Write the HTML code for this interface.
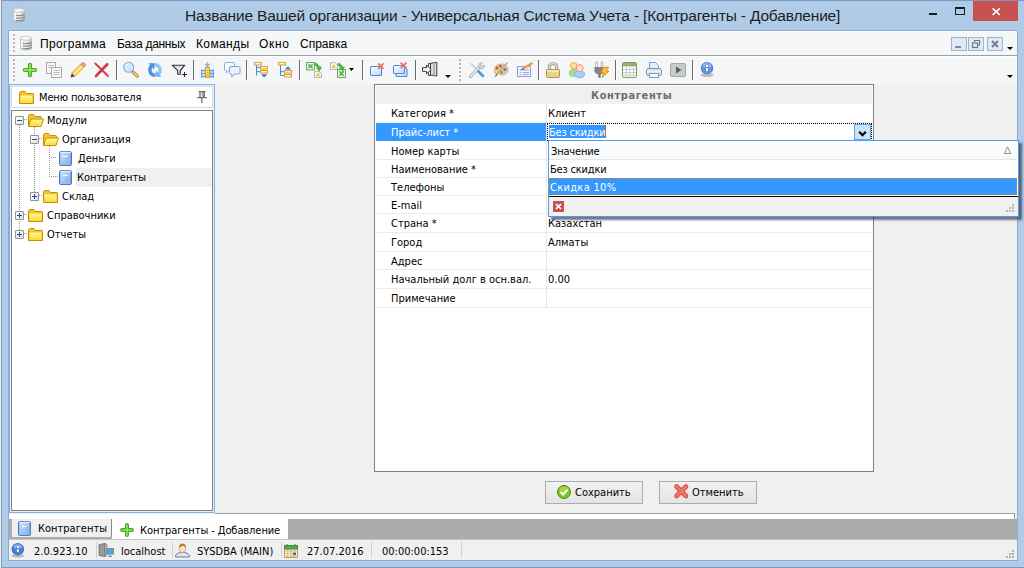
<!DOCTYPE html>
<html lang="ru">
<head>
<meta charset="utf-8">
<title>Контрагенты - Добавление</title>
<style>
*{box-sizing:border-box;margin:0;padding:0}
html,body{width:1024px;height:568px;overflow:hidden;background:#f1efea}
body{position:relative;font-family:"DejaVu Sans Condensed","Liberation Sans",sans-serif;font-size:11px;color:#000;line-height:1}
.a{position:absolute}
.t{position:absolute;white-space:nowrap;line-height:16px;height:16px}
.seg{font-family:"Liberation Sans",sans-serif}
svg{position:absolute;overflow:visible}
#frame{left:1px;top:0;width:1023px;height:568px;background:#b0cbe8;border:1px solid #7e98b9;border-right:0}
#edge{left:8px;top:30px;width:1010px;height:531px;background:#8faace}
#title{left:185px;top:7px;font-size:15.5px;line-height:18px;height:18px;color:#1e1e1e;letter-spacing:-.165px}
#close{left:973px;top:1px;width:45px;height:20px;background:#c75050}
#client{left:9px;top:31px;width:1008px;height:529px;background:#f0f0f0}
#menubar{left:9px;top:31px;width:1008px;height:24px;background:#f5f6f7;border-top:1px solid #fff}
#menuline{left:9px;top:55px;width:1008px;height:1px;background:#a0a0a0}
#toolbar{left:9px;top:56px;width:1008px;height:28px;background:#f5f6f7;border-top:1px solid #fdfdfd}
.mi{font-size:12px;top:36px;line-height:16px;height:16px;color:#000}
.sep{position:absolute;top:60px;width:1px;height:20px;background:#6c6c6c;box-shadow:1px 0 0 #fbfbfb}
.grip{position:absolute;width:2px;background-image:repeating-linear-gradient(#bababa 0,#bababa 2px,transparent 2px,transparent 4px)}
.mdib{position:absolute;top:37px;width:16px;height:14px;background:#dfeaf6;border:1px solid #9fb3c9}

.vd{position:absolute;width:1px;background-image:repeating-linear-gradient(#9a9a9a 0,#9a9a9a 1px,transparent 1px,transparent 2px)}
.hd{position:absolute;height:1px;background-image:repeating-linear-gradient(90deg,#9a9a9a 0,#9a9a9a 1px,transparent 1px,transparent 2px)}
.xb{position:absolute;width:9px;height:9px;border:1px solid #919191;background:linear-gradient(135deg,#fff,#e0e0e0);border-radius:1px}
.xb i{position:absolute;left:1px;top:3px;width:5px;height:1px;background:#2c489e}
.xb b{position:absolute;left:3px;top:1px;width:1px;height:5px;background:#2c489e}
.gl{position:absolute;left:376px;width:496px;height:1px;background:#ececec}
.dot{position:absolute;width:2px;height:2px;background:#b8b8b8}
.dot2{position:absolute;width:2px;height:2px;background:#b0b0b0}
.btn{position:absolute;top:481px;width:98px;height:23px;border:1px solid #acacac;background:linear-gradient(#f2f2f2,#e4e4e4)}
.ss{position:absolute;top:542px;width:1px;height:16px;background:#d0d0d0}
</style>
</head>
<body>
<div id="frame" class="a"></div>
<!-- title icon -->
<svg style="left:12px;top:7px" width="14" height="16" viewBox="0 0 14 16"><defs><linearGradient id="bk" x1="0" y1="0" x2="1" y2="1"><stop offset="0" stop-color="#d4e6f8"/><stop offset="1" stop-color="#7daae2"/></linearGradient><linearGradient id="dbg" x1="0" y1="0" x2="1" y2="0"><stop offset="0" stop-color="#f4f4f4"/><stop offset=".55" stop-color="#ececec"/><stop offset="1" stop-color="#bdbdbd"/></linearGradient><linearGradient id="wn" x1="0" y1="0" x2="1" y2="1"><stop offset="0" stop-color="#ffffff"/><stop offset="1" stop-color="#b9d6f8"/></linearGradient><linearGradient id="fy" x1="0" y1="0" x2="0" y2="1"><stop offset="0" stop-color="#fff6a8"/><stop offset="1" stop-color="#ffdc28"/></linearGradient></defs><ellipse cx="7" cy="13.800" rx="6.200" ry="1.800" fill="#9aa8b8" opacity=".45"/><path d="M1.500 3.200v9.300c0 1.200 2.500 2 5.500 2s5.500-.8 5.500-2V3.200z" fill="url(#dbg)" stroke="#b4b4b4" stroke-width=".7"/><ellipse cx="7" cy="3.200" rx="5.500" ry="2" fill="#f8f8f8" stroke="#bcbcbc" stroke-width=".7"/><path d="M4 8.300c1 .3 2 .4 3 .4 3 0 5.500-.8 5.500-2M4 10.800c1 .3 2 .4 3 .4 3 0 5.500-.8 5.500-2M4 13.300c1 .3 2 .4 3 .4 3 0 5.500-.8 5.500-2" fill="none" stroke="#6a6a6a" stroke-width=".9"/></svg>
<div id="title" class="t seg">Название Вашей организации - Универсальная Система Учета - [Контрагенты - Добавление]</div>
<!-- window buttons -->
<div class="a" style="left:929px;top:13px;width:8px;height:2px;background:#1a1a1a"></div>
<div class="a" style="left:955px;top:7px;width:10px;height:8px;border:1px solid #1a1a1a;border-top-width:2px"></div>
<div id="close" class="a"></div>
<svg style="left:992px;top:8px" width="8" height="8" viewBox="0 0 8 8"><path d="M.6 .3L7.800 7M7.800 .3L.6 7" stroke="#fff" stroke-width="1.700" fill="none"/></svg>
<div id="edge" class="a"></div>
<div id="client" class="a"></div>
<div id="menubar" class="a"></div>
<div id="menuline" class="a"></div>
<div id="toolbar" class="a"></div>
<!-- menubar -->
<div class="grip" style="left:13px;top:34px;height:18px"></div>
<svg style="left:19px;top:35px" width="14" height="16" viewBox="0 0 14 16"><ellipse cx="7" cy="13.800" rx="6.200" ry="1.800" fill="#9aa8b8" opacity=".45"/><path d="M1.500 3.200v9.300c0 1.200 2.500 2 5.500 2s5.500-.8 5.500-2V3.200z" fill="url(#dbg)" stroke="#b4b4b4" stroke-width=".7"/><ellipse cx="7" cy="3.200" rx="5.500" ry="2" fill="#f8f8f8" stroke="#bcbcbc" stroke-width=".7"/><path d="M4 8.300c1 .3 2 .4 3 .4 3 0 5.500-.8 5.500-2M4 10.800c1 .3 2 .4 3 .4 3 0 5.500-.8 5.500-2M4 13.300c1 .3 2 .4 3 .4 3 0 5.500-.8 5.500-2" fill="none" stroke="#6a6a6a" stroke-width=".9"/></svg>
<div class="t seg mi" style="left:40px;letter-spacing:.35px">Программа</div>
<div class="t seg mi" style="left:117px;letter-spacing:-.3px">База данных</div>
<div class="t seg mi" style="left:196px;letter-spacing:.38px">Команды</div>
<div class="t seg mi" style="left:259px;letter-spacing:.7px">Окно</div>
<div class="t seg mi" style="left:300px">Справка</div>
<!-- MDI buttons -->
<div class="mdib" style="left:951px"></div>
<div class="a" style="left:955px;top:46px;width:6px;height:2px;background:#7d8894"></div>
<div class="mdib" style="left:968px"></div>
<svg style="left:968px;top:37px" width="16" height="14" viewBox="0 0 16 14"><path d="M6.500 5V3.500h5V8H10" fill="none" stroke="#6f7b88" stroke-width="1.200"/><rect x="4.500" y="6" width="5" height="4.500" fill="none" stroke="#6f7b88" stroke-width="1.200"/></svg>
<div class="mdib" style="left:987px"></div>
<svg style="left:987px;top:37px" width="16" height="14" viewBox="0 0 16 14"><path d="M5 4l6 6M11 4l-6 6" stroke="#6f7b88" stroke-width="1.800" fill="none"/></svg>
<svg style="left:1007px;top:47px" width="6" height="3" viewBox="0 0 6 3"><path d="M0 0h6L3 3z" fill="#000"/></svg>
<!-- toolbar -->
<div class="grip" style="left:13px;top:59px;height:22px"></div>
<div class="grip" style="left:459px;top:59px;height:22px"></div>
<div class="sep" style="left:116px"></div><div class="sep" style="left:193px"></div><div class="sep" style="left:246px"></div><div class="sep" style="left:299px"></div><div class="sep" style="left:362px"></div><div class="sep" style="left:415px"></div><div class="sep" style="left:538px"></div><div class="sep" style="left:615px"></div><div class="sep" style="left:692px"></div>
<!-- 1 plus -->
<svg style="left:22px;top:62px" width="16" height="16" viewBox="0 0 16 16"><path d="M8 2.800v10.400M2.800 8h10.400" stroke="#4aa82c" stroke-width="4.200" stroke-linecap="round"/><path d="M8 2.800v10.400M2.800 8h10.400" stroke="#90e060" stroke-width="1.800" stroke-linecap="round"/></svg>
<!-- 2 copy -->
<svg style="left:46px;top:62px" width="16" height="16" viewBox="0 0 16 16"><rect x=".5" y=".5" width="9" height="11" fill="#f7f7f7" stroke="#a9a9a9"/><path d="M2 3.500h6M2 5.500h3" stroke="#c2c2c2"/><rect x="5.500" y="5.500" width="10" height="10" fill="#f7f7f7" stroke="#a9a9a9"/><path d="M7.500 8.500h6M7.500 10.500h6M7.500 12.500h6" stroke="#bcbcbc"/></svg>
<!-- 3 pencil -->
<svg style="left:70px;top:62px" width="16" height="16" viewBox="0 0 16 16"><path d="M.6 15.400l1.200-4.400 3.200 3.200z" fill="#3e3e3e"/><path d="M1.800 11l9-9 3.200 3.200-9 9z" fill="#f9dc5c" stroke="#d29a22" stroke-width=".8" stroke-linejoin="round"/><path d="M3.600 12.600l9-9" stroke="#fdf0a8" stroke-width="1.200"/><path d="M10.800 2l1.300-1.200c.5-.5 1.200-.5 1.700 0l1.400 1.400c.5.500.5 1.200 0 1.700L14 5.200z" fill="#f09a9a" stroke="#cc6e6e" stroke-width=".7"/></svg>
<!-- 4 red x -->
<svg style="left:94px;top:62px" width="16" height="16" viewBox="0 0 16 16"><path d="M1.300 1.500L14 14" stroke="#d63c46" stroke-width="1.900" stroke-linecap="round" fill="none"/><path d="M13.300 2.200L2 14" stroke="#d63c46" stroke-width="2.700" stroke-linecap="round" fill="none"/></svg>
<!-- 5 magnifier -->
<svg style="left:123px;top:62px" width="16" height="16" viewBox="0 0 16 16"><path d="M9.800 9.800l4.500 4.300" stroke="#b48648" stroke-width="3.300" stroke-linecap="round"/><path d="M10 10l4.200 4" stroke="#f4cc80" stroke-width="1.700" stroke-linecap="round"/><circle cx="5.700" cy="5.300" r="5" fill="#cdeafb" stroke="#8aa6ca" stroke-width="1.100"/><path d="M2.600 4.500a3.300 3.300 0 0 1 3-2.600" stroke="#fff" stroke-width="1.300" fill="none"/></svg>
<!-- 6 refresh -->
<svg style="left:147px;top:62px" width="16" height="16" viewBox="0 0 16 16"><path d="M8 13.300A5.300 5.300 0 0 1 6.500 3" stroke="#4a92dc" stroke-width="3.400" fill="none"/><path d="M8 2.700A5.300 5.300 0 0 1 9.500 13" stroke="#8cc6f2" stroke-width="3.400" fill="none"/><path d="M1.500 1l6.500.5-1 6z" fill="#4a92dc"/><path d="M14.500 15l-6.500-.5 1-6z" fill="#6ab4ee"/></svg>
<!-- 7 filter -->
<svg style="left:171px;top:62px" width="16" height="16" viewBox="0 0 16 16"><path d="M1.200 3.200h12.600L9.300 8.700v3.600H6.700V8.700z" fill="#dde3ec" stroke="#2e2e2e" stroke-width="1.100" stroke-linejoin="round"/><path d="M13.500 10v5M11 12.500h5" stroke="#2a2a2a" stroke-width="1.100"/></svg>
<!-- 8 insert table -->
<svg style="left:200px;top:62px" width="16" height="16" viewBox="0 0 16 16"><rect x="1.500" y="7.500" width="12" height="8" fill="#f4f9ff" stroke="none"/><rect x="10" y="8" width="3.500" height="7.500" fill="#bfe4f8"/><path d="M1 8.500h13M1 11.500h13M1 14.500h13" stroke="#5b9cf0" stroke-width="1.400"/><path d="M1.500 8v7.500M13.500 8v7.500" stroke="#5b9cf0"/><rect x="5.500" y="5.500" width="4" height="10" fill="#f9e24c" stroke="#d2a21e"/><path d="M5.500 8.500h4M5.500 11h4M5.500 13.500h4" stroke="#d8aa28" stroke-width=".8"/><path d="M7.500 .3v3M5.200 1.800l2.300 2.700 2.300-2.700" stroke="#86b0e4" stroke-width="1.300" fill="none"/></svg>
<!-- 9 chat -->
<svg style="left:224px;top:62px" width="16" height="16" viewBox="0 0 16 16"><path d="M1.500 .5h7.500a1.500 1.500 0 0 1 1.500 1.500V7a1.500 1.500 0 0 1-1.500 1.500H5L2.500 11V8.500H1.500A1.500 1.500 0 0 1 .5 7V2A1.500 1.500 0 0 1 1.500 .5z" fill="#f8fbff" stroke="#8cacd8"/><path d="M7 4.500h7.500a1.500 1.500 0 0 1 1.500 1.500v4.500a1.500 1.500 0 0 1-1.500 1.500H10.500L7.800 15V12H7a1.500 1.500 0 0 1-1.500-1.500V6A1.500 1.500 0 0 1 7 4.500z" fill="#eef4fc" stroke="#7c9fd0"/></svg>
<!-- 10 tree expand -->
<svg style="left:253px;top:62px" width="16" height="16" viewBox="0 0 16 16"><path d="M3.500 3v10.500M3.500 5.700h4M3.500 9.700h4" stroke="#4a86d8" fill="none"/><rect x="1.500" y=".5" width="7" height="2.500" fill="#fff2c4" stroke="#d8a434"/><rect x="7.500" y="4.500" width="7" height="2.500" fill="#fff2c4" stroke="#d8a434"/><rect x="7.500" y="8.500" width="7" height="2.500" fill="#fff2c4" stroke="#d8a434"/><path d="M8 12.200h6.400l-3.200 3.200z" fill="#3f78cc"/></svg>
<!-- 11 tree collapse -->
<svg style="left:277px;top:62px" width="16" height="16" viewBox="0 0 16 16"><path d="M3.500 3v10.500h4M3.500 9.700h4" stroke="#4a86d8" fill="none"/><rect x="1.500" y=".5" width="7" height="2.500" fill="#fff2c4" stroke="#d8a434"/><rect x="7.500" y="8.500" width="7" height="2.500" fill="#fff2c4" stroke="#d8a434"/><rect x="7.500" y="12.500" width="7" height="2.500" fill="#fff2c4" stroke="#d8a434"/><path d="M7.800 7.400h6.400l-3.200-3.200z" fill="#3f78cc"/></svg>
<!-- 12 excel export -->
<svg style="left:306px;top:62px" width="16" height="16" viewBox="0 0 16 16"><rect x=".5" y=".5" width="8" height="7.500" fill="#edf7e9" stroke="#62b052" stroke-width="1"/><path d="M2.300 2.200l4.400 4M6.700 2.200l-4.400 4" stroke="#58a84a" stroke-width="1.500"/><path d="M8.500 9.500h4.500l2.500 2.500v3.500h-7z" fill="#f6f6f6" stroke="#b4b4b4"/><path d="M12 10.500l2.200 3.700H9.800z" fill="#f6bc20"/><path d="M9 1.500l4 3.800" stroke="#4cb040" stroke-width="2.600"/><path d="M10 6l6-1.800-2.300 5.500z" fill="#4cb040"/></svg>
<!-- 13 excel import -->
<svg style="left:330px;top:62px" width="16" height="16" viewBox="0 0 16 16"><path d="M.5 .5h4.500l2.500 2.500v4.500h-7z" fill="#f6f6f6" stroke="#b8b8b8"/><path d="M3.800 2.300l2.200 3.700H1.600z" fill="#f6bc20"/><rect x="7.500" y="7.500" width="8" height="8" fill="#edf7e9" stroke="#62b052" stroke-width="1"/><path d="M9.300 9.300l4.400 4.400M13.700 9.300l-4.400 4.400" stroke="#58a84a" stroke-width="1.500"/><path d="M8 1.500l4 3.800" stroke="#4cb040" stroke-width="2.600"/><path d="M9 6l6-1.800-2.300 5.500z" fill="#4cb040"/></svg>
<svg style="left:349px;top:68px" width="5" height="3" viewBox="0 0 5 3"><path d="M0 0h5L2.500 3z" fill="#000"/></svg>
<!-- 14 close window -->
<svg style="left:370px;top:62px" width="16" height="16" viewBox="0 0 16 16"><rect x=".5" y="4.500" width="11" height="9" rx="1" fill="url(#wn)" stroke="#4a8ce8" stroke-width="1.100"/><path d="M8 1.300l5.600 5.600M13.600 1.300L8 6.900" stroke="#e67352" stroke-width="1.700"/></svg>
<!-- 15 close all -->
<svg style="left:393px;top:62px" width="16" height="16" viewBox="0 0 16 16"><rect x="3" y="6.500" width="11" height="8" rx="1" fill="url(#wn)" stroke="#4a8ce8" stroke-width="1.100"/><rect x=".5" y="3.500" width="11" height="8" rx="1" fill="url(#wn)" stroke="#4a8ce8" stroke-width="1.100"/><path d="M7.700 .6l5.600 5.600M13.300 .6L7.700 6.200" stroke="#e67352" stroke-width="1.700"/></svg>
<!-- 16 exit door -->
<svg style="left:422px;top:62px" width="16" height="16" viewBox="0 0 16 16"><path d="M8.500 1.500H6.500v3M6.500 10.500v3h2" stroke="#3c3c3c" fill="none"/><path d="M8.500 1.300l6.300-.9v13.600l-6.300-.9z" fill="#dedede" stroke="#3c3c3c" stroke-width="1" stroke-linejoin="round"/><path d="M12 1.500v12" stroke="#b4b4b4" stroke-width="2"/><path d="M.5 5.700h4V3.200L9.200 7.500 4.500 11.800V9.300h-4z" fill="#fcfcfc" stroke="#333" stroke-width="1" stroke-linejoin="round"/></svg>
<svg style="left:445px;top:75px" width="6" height="3" viewBox="0 0 6 3"><path d="M0 0h6L3 3z" fill="#000"/></svg>
<!-- 17 tools -->
<svg style="left:469px;top:62px" width="16" height="16" viewBox="0 0 16 16"><path d="M2 1.500l8 8" stroke="#c8c8c8" stroke-width="1.600"/><path d="M9 9l5 5" stroke="#4f9be0" stroke-width="2.800" stroke-linecap="round"/><path d="M1.500 14.500l8.500-9" stroke="#9a9a9a" stroke-width="3" stroke-linecap="round"/><path d="M1.500 14.500l8.500-9" stroke="#f2f2f2" stroke-width="1.600" stroke-linecap="round"/><path d="M9.500 3.500a3 3 0 0 1 4-2.500l-2 2 .5 1.500 1.500.5 2-2a3 3 0 0 1-4 3.500z" fill="#ececec" stroke="#9a9a9a" stroke-width=".8"/></svg>
<!-- 18 palette -->
<svg style="left:493px;top:62px" width="16" height="16" viewBox="0 0 16 16"><path d="M8 2c4 0 7 2 7 5.500S12 13 8 13c-1.500 0-1.500-1.500-2.500-1.500S3 12.500 2 11 .5 2 8 2z" fill="#ecc98a" stroke="#d4aa66" stroke-width=".8"/><circle cx="4" cy="6" r="1.500" fill="#e6454a"/><circle cx="7.500" cy="4" r="1.300" fill="#6a6a6a"/><circle cx="12" cy="7.500" r="1.600" fill="#4a86e0"/><circle cx="8.500" cy="10.500" r="1.400" fill="#4fb84a"/><circle cx="3.500" cy="9.500" r="1.200" fill="#f2e24a"/><path d="M14.500 .5L3 13" stroke="#c8a0a0" stroke-width="1.500"/><path d="M1 15.500l2.500-3.500 1 1z" fill="#555"/></svg>
<!-- 19 form edit -->
<svg style="left:517px;top:62px" width="16" height="16" viewBox="0 0 16 16"><rect x=".5" y="4.500" width="13" height="10" fill="#f2f4ff" stroke="#9a9ae0"/><path d="M2.500 8h2M6 8h6M2.500 10.500h2M6 10.500h6M2.500 12.500h2M6 12.500h6" stroke="#8aa0e0" stroke-width=".9"/><path d="M6.500 6.500l8-5" stroke="#e6a23a" stroke-width="2.600" stroke-linecap="round"/><path d="M4.500 8l2-1.500" stroke="#3a3ad0" stroke-width="1.200"/></svg>
<!-- 20 lock -->
<svg style="left:545px;top:62px" width="16" height="16" viewBox="0 0 16 16"><path d="M4.200 8V5.200a3.800 3.800 0 0 1 7.600 0V8" stroke="#8e8e8e" stroke-width="3" fill="none"/><path d="M4.200 8V5.200a3.800 3.800 0 0 1 7.600 0V8" stroke="#dadada" stroke-width="1.600" fill="none"/><rect x="1.500" y="7.500" width="13" height="8" rx="1" fill="#e8d488" stroke="#ae964c"/><path d="M2.200 9h11.600" stroke="#f6ebb8" stroke-width="1.600"/></svg>
<!-- 21 users -->
<svg style="left:569px;top:62px" width="16" height="16" viewBox="0 0 16 16"><ellipse cx="4.300" cy="11" rx="4" ry="3.600" fill="#a6e08c" stroke="#78c462" stroke-width=".7"/><circle cx="4.700" cy="3.800" r="3.300" fill="#fde0a8" stroke="#f0ac4e" stroke-width="1"/><ellipse cx="10.700" cy="12.300" rx="5" ry="3.700" fill="#a8d0f8" stroke="#68a6e6" stroke-width=".7"/><circle cx="10.700" cy="6" r="3.500" fill="#fde0d0" stroke="#f0907e" stroke-width="1"/></svg>
<!-- 22 plug -->
<svg style="left:594px;top:62px" width="16" height="16" viewBox="0 0 16 16"><path d="M2.500 .8v5M8 .8v5" stroke="#a4a4a4" stroke-width="2.400" stroke-linecap="round"/><path d="M2.500 1v5M8 1v5" stroke="#efefef" stroke-width="1.200" stroke-linecap="round"/><path d="M.8 5.500h9v3.300c0 1.800-1.500 3.200-3.500 3.200v3.500H4.700V12C2.500 12 .8 10.600.8 8.800z" fill="#848484" stroke="#666" stroke-width=".6"/><path d="M9.500 5.300h5.300L12 9h3l-7 6.700 2-5H7z" fill="#f9c440" stroke="#e48c28" stroke-width="1" stroke-linejoin="round"/></svg>
<!-- 23 table -->
<svg style="left:622px;top:62px" width="16" height="16" viewBox="0 0 16 16"><rect x=".5" y=".5" width="14" height="15" rx="1.200" fill="#fff" stroke="#7c9a5a"/><rect x="1" y="1" width="13" height="3.400" fill="#8fb36a"/><path d="M1 7.500h13M1 10.500h13M1 13.200h13M4.500 4.500v11M8 4.500v11M11.500 4.500v11" stroke="#c9c9c9" stroke-width="1"/></svg>
<!-- 24 printer -->
<svg style="left:646px;top:62px" width="16" height="16" viewBox="0 0 16 16"><path d="M3.500 7V.5h6l3 3V7" fill="#e3efff" stroke="#6aa2e6"/><rect x=".5" y="6.500" width="15" height="7" rx="2" fill="#dedede" stroke="#8e8e8e"/><path d="M1 9.500h14" stroke="#f4f4f4" stroke-width="1.600"/><rect x="3.500" y="11.500" width="9" height="4" fill="#fafafa" stroke="#6aa2e6"/></svg>
<!-- 25 play -->
<svg style="left:670px;top:62px" width="16" height="16" viewBox="0 0 16 16"><rect x=".5" y="1.500" width="15" height="13" rx="1.500" fill="#c9cdc9" stroke="#a3a8a3"/><path d="M6 4.500v7l5.500-3.500z" fill="#5a5f5a"/></svg>
<!-- 26 info -->
<svg style="left:699px;top:62px" width="16" height="16" viewBox="0 0 16 16"><ellipse cx="8" cy="13" rx="6.500" ry="2" fill="#8e8e8e" opacity=".55"/><circle cx="8" cy="6.200" r="6.200" fill="#4f84d4"/><circle cx="8" cy="6.200" r="5.200" fill="#6398e0"/><ellipse cx="8" cy="3.600" rx="4" ry="2.400" fill="#a4c6f2" opacity=".8"/><rect x="6.600" y="2.700" width="2.800" height="6.800" fill="#2c56a8" opacity=".7"/><rect x="7" y="3" width="2" height="2" fill="#fff"/><rect x="7" y="6" width="2" height="3.200" fill="#fff"/></svg>
<svg style="left:1007px;top:75px" width="6" height="3" viewBox="0 0 6 3"><path d="M0 0h6L3 3z" fill="#000"/></svg>
<!-- left panel -->
<div class="a" style="left:9px;top:84px;width:206px;height:429px;background:#fff;border:1px solid #7fb3ed;box-shadow:inset 0 0 0 1px #e3effc"></div>
<div class="a" style="left:11px;top:86px;width:202px;height:22px;background:#fff;border:1px solid #dcdcdc"></div>
<svg style="left:19px;top:91px" width="15" height="13" viewBox="0 0 15 13"><path d="M.5 12.500V2.500c0-1 .5-2 1.500-2h4l1.500 2h6.500c.5 0 .5.500.5 1v9z" fill="#f6c522" stroke="#c4900c"/><rect x="1.500" y="4.500" width="12" height="7.500" fill="url(#fy)"/></svg>
<div class="t" style="left:39px;top:90px;letter-spacing:-.14px">Меню пользователя</div>
<svg style="left:196px;top:90px" width="12" height="14" viewBox="0 0 12 14"><path d="M4.500 2v5h3.200V2z" fill="#e8e8e8"/><path d="M6.500 2h1.500v5H6.500z" fill="#8a8a8a"/><path d="M2.500 1.700h7M4 1.700V7.500M8.200 1.700V7.500M1.200 7.700h9.600M5.800 8v5" stroke="#6e6e6e" stroke-width="1.300" fill="none"/></svg>
<div class="a" style="left:11px;top:110px;width:202px;height:401px;background:#fff;border:1px solid #7b808b"></div>
<!-- tree -->
<div class="a" style="left:76px;top:168px;width:136px;height:19px;background:#f0f0f0"></div>
<div class="vd" style="left:19px;top:125px;height:110px"></div>
<div class="vd" style="left:34px;top:127px;height:70px"></div>
<div class="vd" style="left:49px;top:146px;height:32px"></div>
<div class="hd" style="left:24px;top:119px;width:4px"></div>
<div class="hd" style="left:39px;top:138px;width:4px"></div>
<div class="hd" style="left:51px;top:157px;width:6px"></div>
<div class="hd" style="left:51px;top:176px;width:7px"></div>
<div class="hd" style="left:39px;top:195px;width:4px"></div>
<div class="hd" style="left:24px;top:214px;width:4px"></div>
<div class="hd" style="left:24px;top:233px;width:4px"></div>
<div class="xb" style="left:15px;top:116px"><i></i></div>
<div class="xb" style="left:30px;top:135px"><i></i></div>
<div class="xb" style="left:30px;top:192px"><i></i><b></b></div>
<div class="xb" style="left:15px;top:211px"><i></i><b></b></div>
<div class="xb" style="left:15px;top:230px"><i></i><b></b></div>
<svg style="left:28px;top:114px" width="16" height="13" viewBox="0 0 16 13"><path d="M.5 12.500V2c0-1 .5-1.500 1.500-1.500h3.500L7 2.500h5.500c.5 0 1 .5 1 1V5" fill="#f6c522" stroke="#c4900c"/><path d="M.5 12.500L3 5h12.500l-2.500 7.500z" fill="url(#fy)" stroke="#c4900c" stroke-linejoin="round"/></svg>
<svg style="left:43px;top:133px" width="16" height="13" viewBox="0 0 16 13"><path d="M.5 12.500V2c0-1 .5-1.500 1.500-1.500h3.500L7 2.500h5.500c.5 0 1 .5 1 1V5" fill="#f6c522" stroke="#c4900c"/><path d="M.5 12.500L3 5h12.500l-2.500 7.500z" fill="url(#fy)" stroke="#c4900c" stroke-linejoin="round"/></svg>
<svg style="left:43px;top:190px" width="15" height="13" viewBox="0 0 15 13"><path d="M.5 12.500V2.500c0-1 .5-2 1.500-2h4l1.500 2h6.500c.5 0 .5.500.5 1v9z" fill="#f6c522" stroke="#c4900c"/><rect x="1.500" y="4.500" width="12" height="7.500" fill="url(#fy)"/></svg>
<svg style="left:28px;top:209px" width="15" height="13" viewBox="0 0 15 13"><path d="M.5 12.500V2.500c0-1 .5-2 1.500-2h4l1.500 2h6.500c.5 0 .5.500.5 1v9z" fill="#f6c522" stroke="#c4900c"/><rect x="1.500" y="4.500" width="12" height="7.500" fill="url(#fy)"/></svg>
<svg style="left:28px;top:228px" width="15" height="13" viewBox="0 0 15 13"><path d="M.5 12.500V2.500c0-1 .5-2 1.500-2h4l1.500 2h6.500c.5 0 .5.500.5 1v9z" fill="#f6c522" stroke="#c4900c"/><rect x="1.500" y="4.500" width="12" height="7.500" fill="url(#fy)"/></svg>
<svg style="left:59px;top:151px" width="13" height="15" viewBox="0 0 13 15"><rect x=".5" y=".5" width="12" height="14" rx="1.500" fill="#5a8cd2" stroke="#4a7ac6"/><rect x="1.500" y="1.500" width="9.500" height="12" fill="url(#bk)" stroke="#a9c8f0" stroke-width=".8"/><path d="M1.500 1.300h10.500" stroke="#f2f8ff" stroke-width="1"/><path d="M4 5.500h4.500" stroke="#fff" stroke-width="1.100"/></svg>
<svg style="left:59px;top:170px" width="13" height="15" viewBox="0 0 13 15"><rect x=".5" y=".5" width="12" height="14" rx="1.500" fill="#5a8cd2" stroke="#4a7ac6"/><rect x="1.500" y="1.500" width="9.500" height="12" fill="url(#bk)" stroke="#a9c8f0" stroke-width=".8"/><path d="M1.500 1.300h10.500" stroke="#f2f8ff" stroke-width="1"/><path d="M4 5.500h4.500" stroke="#fff" stroke-width="1.100"/></svg>
<div class="t" style="left:47px;top:113px">Модули</div>
<div class="t" style="left:62px;top:132px">Организация</div>
<div class="t" style="left:78px;top:151px">Деньги</div>
<div class="t" style="left:77px;top:170px">Контрагенты</div>
<div class="t" style="left:62px;top:189px">Склад</div>
<div class="t" style="left:47px;top:208px">Справочники</div>
<div class="t" style="left:47px;top:227px">Отчеты</div>
<!-- form panel -->
<div class="a" style="left:374px;top:84px;width:500px;height:388px;background:#fff;border:1px solid #7b808b"></div>
<div class="a" style="left:376px;top:86px;width:496px;height:18px;background:#f0f0f0"></div>
<div class="t" style="left:591px;top:88px;font-weight:bold;color:#6d6d6d;letter-spacing:.6px" id="fh">Контрагенты</div>
<div class="gl" style="top:122px"></div><div class="gl" style="top:159px"></div><div class="gl" style="top:177px"></div><div class="gl" style="top:195px"></div><div class="gl" style="top:213px"></div><div class="gl" style="top:232px"></div><div class="gl" style="top:251px"></div><div class="gl" style="top:269px"></div><div class="gl" style="top:288px"></div><div class="gl" style="top:307px"></div>
<div class="a" style="left:546px;top:104px;width:1px;height:204px;background:#e6e6e6"></div>
<div class="a" style="left:376px;top:123px;width:170px;height:18px;background:#3399ff"></div>
<div class="t" style="left:391px;top:106px">Категория *</div>
<div class="t" style="left:391px;top:125px;color:#fff">Прайс-лист *</div>
<div class="t" style="left:391px;top:144px">Номер карты</div>
<div class="t" style="left:391px;top:162px">Наименование *</div>
<div class="t" style="left:391px;top:180px">Телефоны</div>
<div class="t" style="left:391px;top:198px">E-mail</div>
<div class="t" style="left:391px;top:216px">Страна *</div>
<div class="t" style="left:391px;top:235px">Город</div>
<div class="t" style="left:391px;top:254px">Адрес</div>
<div class="t" style="left:391px;top:272px">Начальный долг в осн.вал.</div>
<div class="t" style="left:391px;top:291px">Примечание</div>
<div class="t" style="left:548px;top:106px">Клиент</div>
<div class="t" style="left:548px;top:216px">Казахстан</div>
<div class="t" style="left:548px;top:235px">Алматы</div>
<div class="t" style="left:548px;top:272px">0.00</div>
<!-- active editor -->
<div class="a" style="left:547px;top:123px;width:325px;height:18px;background:#fff;border:1px dotted #000"></div>
<div class="a" style="left:549px;top:125px;width:56px;height:13px;background:#3399ff"></div>
<div class="a" style="left:605px;top:125px;width:1px;height:13px;background:#c86400"></div>
<div class="t" style="left:549px;top:125px;color:#fff;letter-spacing:-.2px">Без скидки</div>
<div class="a" style="left:854px;top:124px;width:17px;height:16px;background:#cbe3f8;border:1px solid #5fa7ec"></div>
<svg style="left:858px;top:130px" width="9" height="8" viewBox="0 0 9 8"><path d="M1.200 1.800L4.500 5.200 7.800 1.800" stroke="#000" stroke-width="2.200" fill="none"/></svg>
<!-- popup -->
<div class="a" style="left:548px;top:140px;width:471px;height:77px;background:#fff;border:1px solid #4d9cf0;box-shadow:3px 3px 2px rgba(20,30,50,.6)"></div>
<div class="a" style="left:549px;top:141px;width:469px;height:18px;background:linear-gradient(#fdfdfd,#f8f9fa)"></div>
<div class="a" style="left:549px;top:159px;width:468px;height:1px;background:#dbe7f5"></div>
<div class="t" style="left:551px;top:144px;letter-spacing:-.18px">Значение</div>
<svg style="left:1004px;top:146px" width="7" height="8" viewBox="0 0 7 8"><path d="M3.500 .8L6.500 7.500H.5z" fill="#fff" stroke="#8c8c8c" stroke-width="1"/></svg>
<div class="t" style="left:550px;top:162px;letter-spacing:-.2px">Без скидки</div>
<div class="a" style="left:549px;top:178px;width:468px;height:17px;background:#3399ff;border:1px dotted #d07a28"></div>
<div class="t" style="left:550px;top:180px;color:#fff;letter-spacing:.3px">Скидка 10%</div>
<div class="a" style="left:549px;top:196px;width:469px;height:1px;background:#000"></div>
<div class="a" style="left:549px;top:197px;width:469px;height:19px;background:#f0f0f0"></div>
<div class="a" style="left:553px;top:201px;width:11px;height:11px;background:#c75050"></div>
<svg style="left:555px;top:203px" width="7" height="7" viewBox="0 0 7 7"><path d="M1 1.200l5 4.800M6 1.200L1 6" stroke="#fff" stroke-width="1.700" fill="none"/></svg>
<div class="dot" style="left:1012px;top:204px"></div><div class="dot" style="left:1009px;top:207px"></div><div class="dot" style="left:1012px;top:207px"></div><div class="dot" style="left:1006px;top:210px"></div><div class="dot" style="left:1009px;top:210px"></div><div class="dot" style="left:1012px;top:210px"></div>
<!-- buttons -->
<div class="btn" style="left:545px"></div>
<svg style="left:557px;top:485px" width="14" height="14" viewBox="0 0 14 14"><circle cx="7" cy="7" r="6.500" fill="#84c420" stroke="#4c8a10"/><ellipse cx="7" cy="4.500" rx="4.500" ry="2.800" fill="#b4e060" opacity=".7"/><path d="M3.500 7l2.500 2.500 4.500-4.500" stroke="#fff" stroke-width="2" fill="none"/></svg>
<div class="t" style="left:575px;top:485px">Сохранить</div>
<div class="btn" style="left:659px"></div>
<svg style="left:674px;top:484px" width="14" height="14" viewBox="0 0 14 14"><path d="M2.500 2.500l9.500 9.500M12 2.500L2.500 12" stroke="#dc4a3e" stroke-width="4.600" stroke-linecap="round"/><path d="M2.500 2.500l9.500 9.500M12 2.500L2.500 12" stroke="#f07868" stroke-width="2.600" stroke-linecap="round"/></svg>
<div class="t" style="left:692px;top:485px">Отменить</div>
<!-- bottom area -->
<div class="a" style="left:9px;top:514px;width:1006px;height:5px;background:#fff"></div>
<div class="a" style="left:215px;top:513px;width:800px;height:1px;background:#a0a0a0"></div>
<div class="a" style="left:1014px;top:513px;width:1px;height:6px;background:#a0a0a0"></div>
<div class="a" style="left:9px;top:519px;width:1008px;height:20px;background:#ababab"></div>
<div class="a" style="left:12px;top:519px;width:100px;height:18px;background:#f0f0f0;border-right:1px solid #8a8a8a"></div>
<svg style="left:18px;top:521px" width="13" height="15" viewBox="0 0 13 15"><rect x=".5" y=".5" width="12" height="14" rx="1.500" fill="#5a8cd2" stroke="#4a7ac6"/><rect x="1.500" y="1.500" width="9.500" height="12" fill="url(#bk)" stroke="#a9c8f0" stroke-width=".8"/><path d="M1.500 1.300h10.500" stroke="#f2f8ff" stroke-width="1"/><path d="M4 5.500h4.500" stroke="#fff" stroke-width="1.100"/></svg>
<div class="t" style="left:38px;top:521px">Контрагенты</div>
<div class="a" style="left:112px;top:514px;width:176px;height:25px;background:#fff"></div>
<div class="a" style="left:9px;top:539px;width:1008px;height:1px;background:#c6c6c6"></div>
<svg style="left:120px;top:523px" width="14" height="14" viewBox="0 0 14 14"><path d="M7 2v10M2 7h10" stroke="#4aa82c" stroke-width="4" stroke-linecap="round"/><path d="M7 2v10M2 7h10" stroke="#90e060" stroke-width="1.700" stroke-linecap="round"/></svg>
<div class="t" style="left:140px;top:523px;letter-spacing:-.08px">Контрагенты - Добавление</div>
<!-- status bar -->
<div class="a" style="left:9px;top:540px;width:1008px;height:20px;background:#f0f0f0"></div>
<svg style="left:11px;top:543px" width="14" height="14" viewBox="0 0 14 14"><ellipse cx="6.800" cy="12.800" rx="6.300" ry="1.800" fill="#8e8e8e" opacity=".55"/><circle cx="6.800" cy="6.200" r="6.200" fill="#3a6fcc"/><circle cx="6.800" cy="6.200" r="5.200" fill="#4a80d8"/><ellipse cx="6.800" cy="3.600" rx="4" ry="2.400" fill="#9cc0f0" opacity=".8"/><rect x="5.400" y="2.700" width="2.800" height="6.800" fill="#24489a" opacity=".7"/><rect x="5.800" y="3" width="2" height="2" fill="#fff"/><rect x="5.800" y="6" width="2" height="3.200" fill="#fff"/></svg>
<div class="t" style="left:34px;top:544px">2.0.923.10</div>
<div class="ss" style="left:96px"></div>
<svg style="left:98px;top:543px" width="16" height="15" viewBox="0 0 16 15"><path d="M1 1.500l6-1v13l-6-1z" fill="#9a9a9a" stroke="#6a6a6a" stroke-width=".8"/><path d="M7 .5l2 1v11l-2 1z" fill="#c8c8c8" stroke="#6a6a6a" stroke-width=".6"/><rect x="8.500" y="5.500" width="7" height="5.500" fill="#3ab0f4" stroke="#8a8a8a"/><path d="M10 13.500h4M12 11v2.500" stroke="#8a8a8a" stroke-width="1.200"/></svg>
<div class="t" style="left:121px;top:544px">localhost</div>
<div class="ss" style="left:172px"></div>
<svg style="left:175px;top:543px" width="15" height="15" viewBox="0 0 15 15"><path d="M.5 14c0-3 2-4.500 7-4.500s7 1.500 7 4.500z" fill="#dfe4f2" stroke="#6a78b0"/><ellipse cx="7.500" cy="5.500" rx="3.300" ry="4" fill="#fbe0c0" stroke="#c89a6a" stroke-width=".7"/><path d="M4 4.500c0-3 2-4 3.500-4s3.500 1 3.500 4c-1.500-.5-2-1.500-3-2-.8.800-2.500 1.500-4 2z" fill="#b8742a"/></svg>
<div class="t" style="left:197px;top:544px">SYSDBA (MAIN)</div>
<div class="ss" style="left:281px"></div>
<svg style="left:284px;top:544px" width="14" height="14" viewBox="0 0 14 14"><rect x=".5" y="1.500" width="13" height="12" fill="#f2ead0" stroke="#c8a040"/><rect x=".5" y="1.500" width="13" height="3.500" fill="#4fae4a" stroke="#3a8a38"/><path d="M3 0v3M11 0v3" stroke="#7a7a7a" stroke-width="1.200"/><path d="M2.500 7h2M6 7h2M9.500 7h2M2.500 9.500h2M6 9.500h2M2.500 12h2M6 12h2M9.500 12h2" stroke="#d8b050" stroke-width="1.600"/><rect x="9" y="8.500" width="3" height="2.500" fill="#2a6ae0"/></svg>
<div class="t" style="left:307px;top:544px">27.07.2016</div>
<div class="ss" style="left:371px"></div>
<div class="t" style="left:382px;top:544px">00:00:00:153</div>
<div class="ss" style="left:461px"></div>
<div class="dot2" style="left:1012px;top:550px"></div><div class="dot2" style="left:1009px;top:553px"></div><div class="dot2" style="left:1012px;top:553px"></div><div class="dot2" style="left:1006px;top:556px"></div><div class="dot2" style="left:1009px;top:556px"></div><div class="dot2" style="left:1012px;top:556px"></div>
</body>
</html>
